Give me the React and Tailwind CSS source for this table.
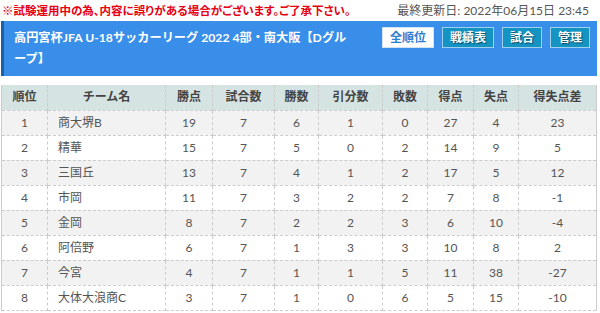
import React from "react";

const rows = [
  [1, "商大堺B", 19, 7, 6, 1, 0, 27, 4, 23],
  [2, "精華", 15, 7, 5, 0, 2, 14, 9, 5],
  [3, "三国丘", 13, 7, 4, 1, 2, 17, 5, 12],
  [4, "市岡", 11, 7, 3, 2, 2, 7, 8, -1],
  [5, "金岡", 8, 7, 2, 2, 3, 6, 10, -4],
  [6, "阿倍野", 6, 7, 1, 3, 3, 10, 8, 2],
  [7, "今宮", 4, 7, 1, 1, 5, 11, 38, -27],
  [8, "大体大浪商C", 3, 7, 1, 0, 6, 5, 15, -10],
];

const heads = ["順位", "チーム名", "勝点", "試合数", "勝数", "引分数", "敗数", "得点", "失点", "得失点差"];
const widths = ["w-[46px]", "w-[118px]", "w-[47px]", "w-[62px]", "w-[44px]", "w-[64px]", "w-[45px]", "w-[46px]", "w-[45px]", "w-[78px]"];

export default function App() {
  return (
    <div className="w-[597px] bg-white" style={{ fontFamily: '"Lato", "Noto Sans CJK JP", sans-serif' }}>
      <div className="flex items-center justify-between h-[21px] pl-[2px] pr-[8px]">
        <span className="text-[11.5px] font-bold text-[#e60012] [font-feature-settings:'palt']">※試験運用中の為、内容に誤りがある場合がございます。ご了承下さい。</span>
        <span className="text-[12px] text-[#555]">最終更新日: 2022年06月15日 23:45</span>
      </div>
      <div className="flex items-start ml-[1px] h-[55px] bg-[#388ee8] border-l-[3px] border-[#1d5fa6]">
        <div className="w-[354px] shrink-0 pl-[10px] pt-[6px] text-[12.2px] font-bold leading-[21px] text-white">
          高円宮杯JFA U-18サッカーリーグ 2022 4部・南大阪【Dグループ】
        </div>
        <div className="flex gap-[8px] pt-[6px] pl-[24px]">
          <span className="h-[21px] px-[7px] flex items-center bg-white text-[#2a7fd0] text-[12px] font-bold border border-[#cfe3f5]">全順位</span>
          {["戦績表", "試合", "管理"].map((t) => (
            <span key={t} className="h-[21px] px-[7px] flex items-center bg-[#1593c2] text-white text-[12px] font-bold border border-[#9fd0ee] [text-shadow:1px_1px_1px_rgba(0,0,0,0.5)]">{t}</span>
          ))}
        </div>
      </div>
      <table className="mt-[9px] ml-[1px] border-collapse text-[12px] text-[#555] border-x border-[#ccc]">
        <thead>
          <tr className="h-[25px] bg-[#d6e3e3]">
            {heads.map((h, i) => (
              <th key={h} className={`${widths[i]} p-0 font-bold text-[#444] text-center border-x border-dashed border-[#ccc]`}>{h}</th>
            ))}
          </tr>
        </thead>
        <tbody>
          {rows.map((r, ri) => (
            <tr key={ri} className={`h-[25px] ${ri % 2 === 0 ? "bg-[#f2f2f2]" : "bg-white"}`}>
              {r.map((c, ci) => (
                <td key={ci} className={`p-0 border border-dashed border-[#ccc] ${ci === 1 ? "text-left pl-[10px]" : "text-center"}`}>{c}</td>
              ))}
            </tr>
          ))}
        </tbody>
      </table>
    </div>
  );
}
